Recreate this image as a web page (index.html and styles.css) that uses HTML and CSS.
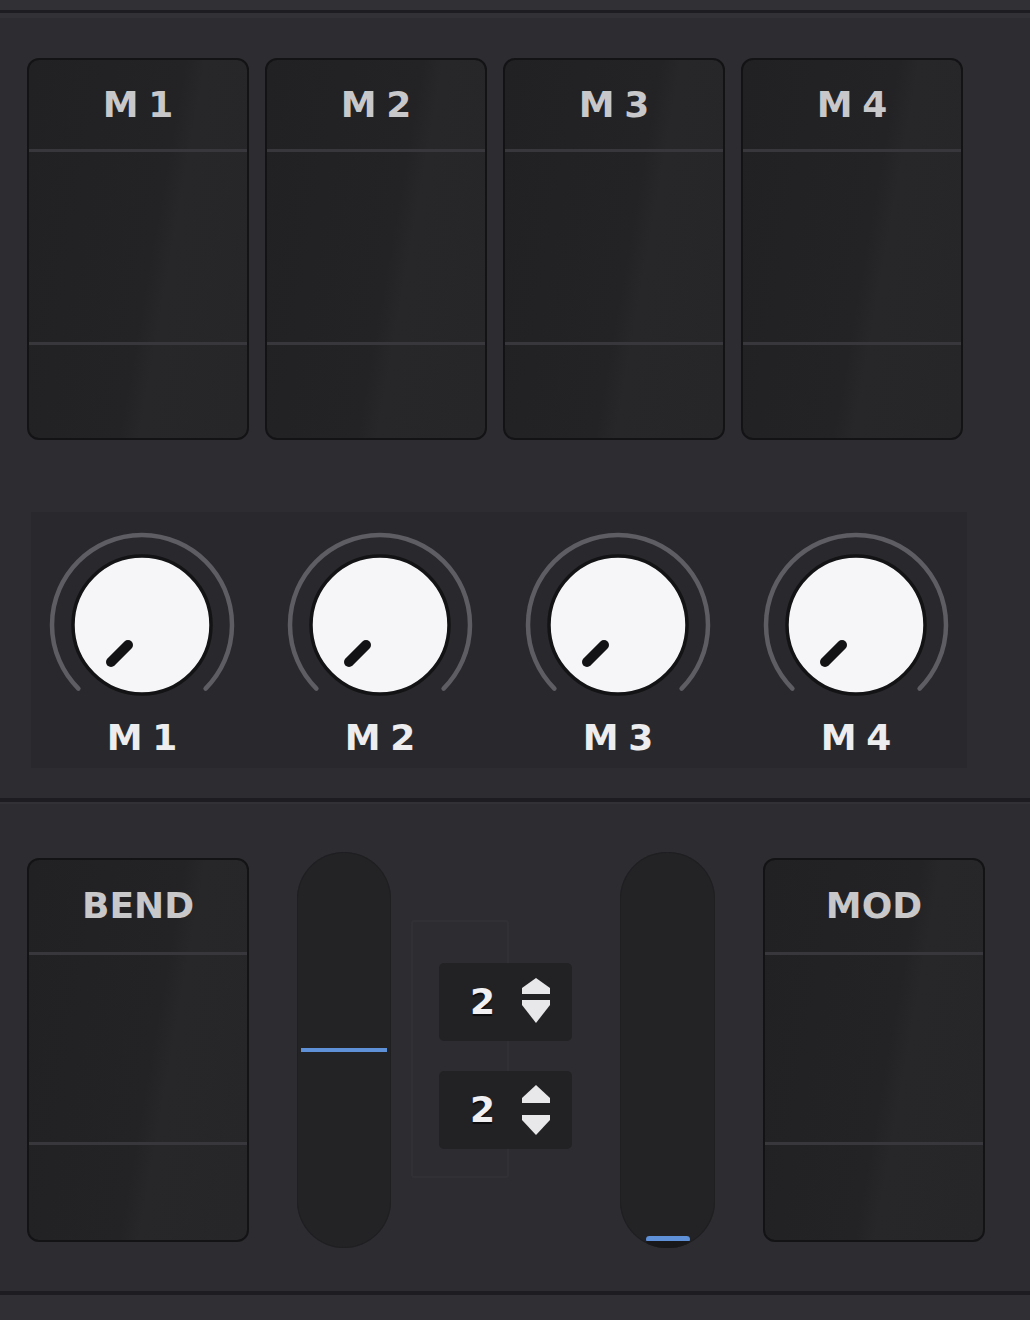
FILE: index.html
```html
<!DOCTYPE html>
<html lang="en">
<head>
<meta charset="utf-8">
<title>Macro controls</title>
<link rel="stylesheet" href="styles.css">
</head>
<body>
<div class="app">
  <div class="topbar"></div>
  <div class="topbar-hl"></div>

  <section class="main">
    <div class="pads">
      <div class="pad"><div class="pad-head">M 1</div><div class="pad-mid"></div><div class="pad-foot"></div></div>
      <div class="pad"><div class="pad-head">M 2</div><div class="pad-mid"></div><div class="pad-foot"></div></div>
      <div class="pad"><div class="pad-head">M 3</div><div class="pad-mid"></div><div class="pad-foot"></div></div>
      <div class="pad"><div class="pad-head">M 4</div><div class="pad-mid"></div><div class="pad-foot"></div></div>
    </div>

    <div class="knobs">
      <div class="knob-cell">
        <svg class="knob" viewBox="0 0 200 178" width="200" height="178">
          <path class="knob-arc" d="M 36.4 163.6 A 90 90 0 1 1 163.6 163.6"/>
          <circle class="knob-body" cx="100" cy="100" r="69"/>
          <line class="knob-ptr" x1="86" y1="120" x2="69" y2="137"/>
        </svg>
        <div class="knob-label">M 1</div>
      </div>
      <div class="knob-cell">
        <svg class="knob" viewBox="0 0 200 178" width="200" height="178">
          <path class="knob-arc" d="M 36.4 163.6 A 90 90 0 1 1 163.6 163.6"/>
          <circle class="knob-body" cx="100" cy="100" r="69"/>
          <line class="knob-ptr" x1="86" y1="120" x2="69" y2="137"/>
        </svg>
        <div class="knob-label">M 2</div>
      </div>
      <div class="knob-cell">
        <svg class="knob" viewBox="0 0 200 178" width="200" height="178">
          <path class="knob-arc" d="M 36.4 163.6 A 90 90 0 1 1 163.6 163.6"/>
          <circle class="knob-body" cx="100" cy="100" r="69"/>
          <line class="knob-ptr" x1="86" y1="120" x2="69" y2="137"/>
        </svg>
        <div class="knob-label">M 3</div>
      </div>
      <div class="knob-cell">
        <svg class="knob" viewBox="0 0 200 178" width="200" height="178">
          <path class="knob-arc" d="M 36.4 163.6 A 90 90 0 1 1 163.6 163.6"/>
          <circle class="knob-body" cx="100" cy="100" r="69"/>
          <line class="knob-ptr" x1="86" y1="120" x2="69" y2="137"/>
        </svg>
        <div class="knob-label">M 4</div>
      </div>
    </div>
  </section>

  <div class="divider"></div>
  <div class="divider-hl"></div>

  <section class="perf">
    <div class="perf-row">
      <div class="pad pad--perf"><div class="pad-head">BEND</div><div class="pad-mid"></div><div class="pad-foot"></div></div>

      <div class="slider"><span class="thumb thumb--mid"></span></div>

      <div class="spin-col">
        <div class="spin">
          <span class="spin-val">2</span>
          <svg class="spin-arrows" viewBox="0 0 30 50" width="30" height="50">
            <polygon points="15,1 29,11 29,17 1,17 1,11"/>
            <polygon points="1,23 29,23 29,28 15,46 1,28"/>
          </svg>
        </div>
        <div class="spin">
          <span class="spin-val">2</span>
          <svg class="spin-arrows" viewBox="0 0 30 50" width="30" height="50">
            <polygon points="15,0 29,13 29,18 1,18 1,13"/>
            <polygon points="1,30 29,30 29,35 15,50 1,35"/>
          </svg>
        </div>
      </div>

      <div class="slider slider--mod"><span class="thumb thumb--bottom"></span></div>

      <div class="pad pad--perf"><div class="pad-head">MOD</div><div class="pad-mid"></div><div class="pad-foot"></div></div>
    </div>
  </section>

  <div class="footer"></div>
</div>
</body>
</html>
```

FILE: styles.css
```css
html, body {
  margin: 0;
  padding: 0;
  background: #2c2c31;
}

body {
  font-family: "DejaVu Sans", "Liberation Sans", sans-serif;
}

.app {
  width: 1030px;
  height: 1320px;
  display: flex;
  flex-direction: column;
  background: #2c2c31;
  overflow: hidden;
}

.topbar {
  height: 10px;
  background: #303035;
  border-bottom: 3px solid #1d1d21;
}

.topbar-hl {
  height: 5px;
  background: #313136;
}

.main {
  padding-top: 40px;
}

.pads {
  display: flex;
  gap: 16px;
  padding-left: 27px;
}

.pad {
  width: 222px;
  height: 382px;
  box-sizing: border-box;
  border: 2px solid #131315;
  border-radius: 12px;
  background: linear-gradient(100deg, #212124 0%, #232326 55%, #272729 62%, #262629 100%);
  display: flex;
  flex-direction: column;
  overflow: hidden;
  flex: none;
}

.pad-head {
  height: 92px;
  flex: none;
  display: flex;
  align-items: center;
  justify-content: center;
  box-sizing: border-box;
  font-size: 36px;
  line-height: 40px;
  font-weight: bold;
  color: #c8c8cb;
  word-spacing: -3px;
  border-bottom: 3px solid #38383c;
}

.pad-mid {
  flex: 1;
  border-bottom: 3px solid #38383c;
}

.pad-foot {
  height: 93px;
  flex: none;
}

.pad--perf {
  height: 384px;
}

.pad--perf .pad-head {
  height: 95px;
}

.pad--perf .pad-foot {
  height: 95px;
}

.knobs {
  display: grid;
  grid-template-columns: repeat(4, 222px);
  column-gap: 16px;
  width: fit-content;
  margin: 72px 0 0 31px;
  background: #29292d;
}

.knob-cell {
  padding: 13px 0 10px;
  display: flex;
  flex-direction: column;
  align-items: center;
}

.knob {
  display: block;
}

.knob-arc {
  fill: none;
  stroke: #5d5d63;
  stroke-width: 4.5;
  stroke-linecap: round;
}

.knob-body {
  fill: #f6f6f8;
  stroke: #131315;
  stroke-width: 3.5;
}

.knob-ptr {
  stroke: #131315;
  stroke-width: 10;
  stroke-linecap: round;
}

.knob-label {
  margin-top: 15px;
  font-size: 36px;
  line-height: 40px;
  font-weight: bold;
  color: #ededef;
  word-spacing: -3px;
  text-align: center;
}

.divider {
  margin-top: 30px;
  height: 4px;
  background: #1d1d21;
}

.divider-hl {
  height: 2px;
  background: #313136;
}

.perf {
  padding: 48px 0 43px 27px;
}

.perf-row {
  display: flex;
  align-items: center;
  gap: 48px;
  height: 396px;
}

.slider {
  position: relative;
  width: 94px;
  height: 396px;
  flex: none;
  border-radius: 47px;
  background: #232326;
  box-shadow: inset 0 0 0 1px #1f1f22;
  overflow: hidden;
}

.slider--mod {
  width: 95px;
}

.thumb {
  position: absolute;
  display: block;
}

.thumb--mid {
  left: 4px;
  right: 4px;
  top: 50%;
  height: 4px;
  margin-top: -2px;
  background: #5f91d9;
}

.thumb--bottom {
  left: 50%;
  width: 44px;
  margin-left: -22px;
  bottom: 0;
  height: 12px;
  box-sizing: border-box;
  border-top: 5px solid #5f91d9;
  border-radius: 4px 4px 10px 10px;
  background: #18181b;
}

.spin-col {
  position: relative;
  width: 133px;
  flex: none;
  display: flex;
  flex-direction: column;
  gap: 30px;
  margin-top: 12px;
}

.spin-col::before {
  content: "";
  position: absolute;
  left: -28px;
  top: -43px;
  width: 98px;
  height: 258px;
  box-sizing: border-box;
  border: 2px solid #303035;
  border-radius: 3px;
}

.spin {
  position: relative;
  z-index: 1;
  height: 78px;
  background: #222225;
  border-radius: 5px;
  display: flex;
  align-items: center;
  gap: 26px;
  padding-left: 31px;
}

.spin-val {
  font-size: 36px;
  line-height: 40px;
  font-weight: bold;
  color: #f0f0f2;
  text-shadow: 0 2px 1px #0c0c0e;
}

.spin-arrows {
  display: block;
  fill: #e8e8ea;
}

.footer {
  flex: 1;
  border-top: 4px solid #1d1d21;
  background: #2f2f34;
}
```
